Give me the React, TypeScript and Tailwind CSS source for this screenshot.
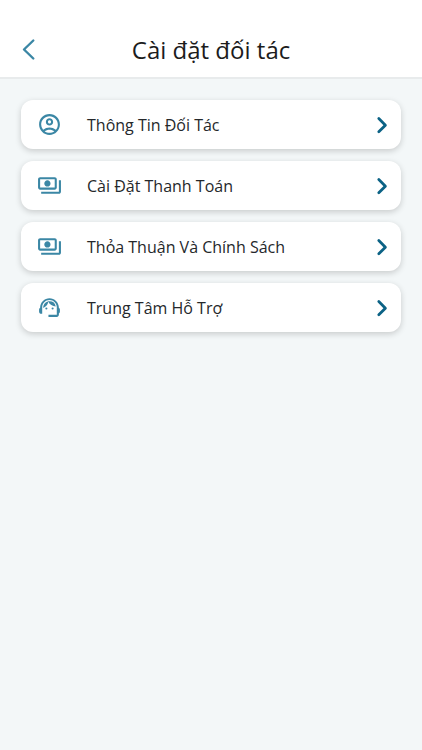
import type { ReactNode } from "react";
import { MdOutlineAccountCircle, MdOutlinePayments, MdSupportAgent } from "react-icons/md";

type Item = { label: string; icon: ReactNode };

const items: Item[] = [
  { label: "Thông Tin Đối Tác", icon: <MdOutlineAccountCircle size={25} /> },
  { label: "Cài Đặt Thanh Toán", icon: <MdOutlinePayments size={25} /> },
  { label: "Thỏa Thuận Và Chính Sách", icon: <MdOutlinePayments size={25} /> },
  { label: "Trung Tâm Hỗ Trợ", icon: <MdSupportAgent size={25} /> },
];

export default function App() {
  return (
    <div className="min-h-screen bg-[#f3f7f8] font-['Open_Sans','Noto_Sans',sans-serif] text-[#1c1c1c]">
      <header className="grid h-[79px] grid-cols-[56px_1fr_56px] items-end border-b-2 border-[#e8ebec] bg-white pb-[7px]">
        <button type="button" aria-label="Quay lại" className="flex h-10 items-center justify-center text-[#3b87a5]">
          <svg width="24" height="24" viewBox="0 0 24 24" fill="none" stroke="currentColor" strokeWidth="2.4" strokeLinecap="round" strokeLinejoin="round">
            <path d="M17.3 2.5 8 11.5l9.3 9" />
          </svg>
        </button>
        <h1 className="text-center text-2xl leading-10">Cài đặt đối tác</h1>
      </header>
      <main className="flex flex-col gap-3 px-[21px] pt-[21px]">
        {items.map(({ label, icon }) => (
          <button
            key={label}
            type="button"
            className="flex h-[49px] items-center rounded-xl bg-white pr-[7px] pl-4 text-left shadow-[0_2px_6px_rgba(0,0,0,0.18)]"
          >
            <span className="text-[#3b87a5]">{icon}</span>
            <span className="ml-[25px] flex-1 text-base text-[#25282b]">{label}</span>
            <svg width="24" height="24" viewBox="0 0 24 24" fill="none" stroke="#0b6285" strokeWidth="2.8" strokeLinecap="round" strokeLinejoin="round">
              <path d="m8.8 5.6 6.6 6.6-6.6 6.6" />
            </svg>
          </button>
        ))}
      </main>
    </div>
  );
}
